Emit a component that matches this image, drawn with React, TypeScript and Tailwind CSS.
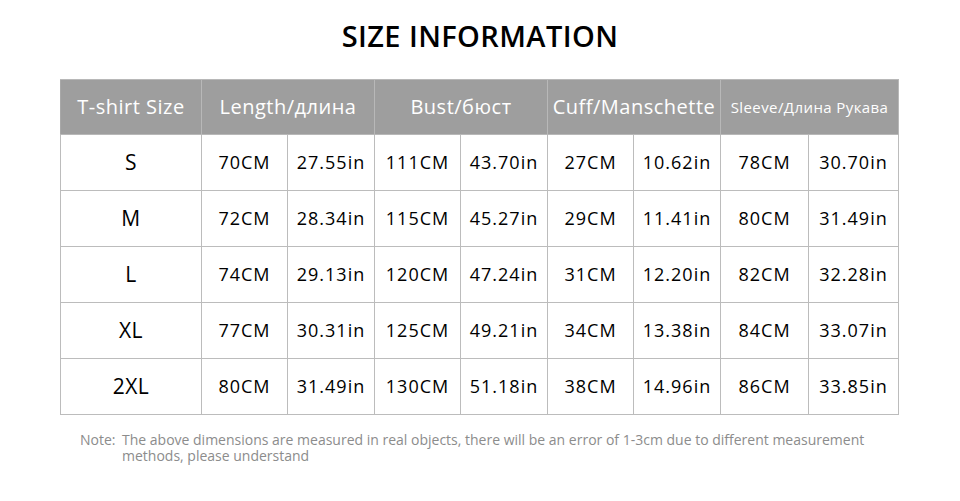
const rows = [
  ['S', '70CM', '27.55in', '111CM', '43.70in', '27CM', '10.62in', '78CM', '30.70in'],
  ['M', '72CM', '28.34in', '115CM', '45.27in', '29CM', '11.41in', '80CM', '31.49in'],
  ['L', '74CM', '29.13in', '120CM', '47.24in', '31CM', '12.20in', '82CM', '32.28in'],
  ['XL', '77CM', '30.31in', '125CM', '49.21in', '34CM', '13.38in', '84CM', '33.07in'],
  ['2XL', '80CM', '31.49in', '130CM', '51.18in', '38CM', '14.96in', '86CM', '33.85in'],
];

const widths = ['141px', '86px', '87px', '86px', '87px', '86px', '87px', '88px', '90px'];

export default function App() {
  return (
    <div className="w-[960px] h-[501px] bg-white font-['Open_Sans',sans-serif] text-black">
      <h1 className="pt-[16px] text-center text-[29px] leading-[40px] font-semibold tracking-[0.4px]">
        SIZE INFORMATION
      </h1>
      <div className="pl-[60px] pt-[23px]">
        <table className="w-[838px] table-fixed border-collapse">
          <colgroup>
            {widths.map((w, i) => (
              <col key={i} style={{ width: w }} />
            ))}
          </colgroup>
          <thead>
            <tr className="h-[55px] bg-[#9e9e9e] text-white text-[20px] tracking-[0.5px]">
              <th className="border border-[#b8b8b8] border-l-[#a8a8a8] font-normal">T-shirt Size</th>
              <th colSpan={2} className="border border-[#b8b8b8] font-normal">Length/длина</th>
              <th colSpan={2} className="border border-[#b8b8b8] font-normal">Bust/бюст</th>
              <th colSpan={2} className="border border-[#b8b8b8] font-normal whitespace-nowrap">Cuff/Manschette</th>
              <th colSpan={2} className="border border-[#b8b8b8] font-normal text-[15px] tracking-[0.4px] whitespace-nowrap">Sleeve/Длина Рукава</th>
            </tr>
          </thead>
          <tbody>
            {rows.map((r) => (
              <tr key={r[0]} className="h-[56px]">
                {r.map((c, i) => (
                  <td
                    key={i}
                    className={
                      i === 0
                        ? 'border border-[#bcbcbc] text-center text-[21px] tracking-[0.5px]'
                        : 'border border-[#bcbcbc] text-center text-[18px] tracking-[1px]'
                    }
                  >
                    {c}
                  </td>
                ))}
              </tr>
            ))}
          </tbody>
        </table>
      </div>
      <div className="flex pl-[80px] pt-[17px] text-[14px] leading-[16px] text-[#8c8c8c]">
        <span className="w-[42px] shrink-0">Note:</span>
        <p className="w-[764px]">
          The above dimensions are measured in real objects, there will be an error of 1-3cm due to different measurement methods, please understand
        </p>
      </div>
    </div>
  );
}
